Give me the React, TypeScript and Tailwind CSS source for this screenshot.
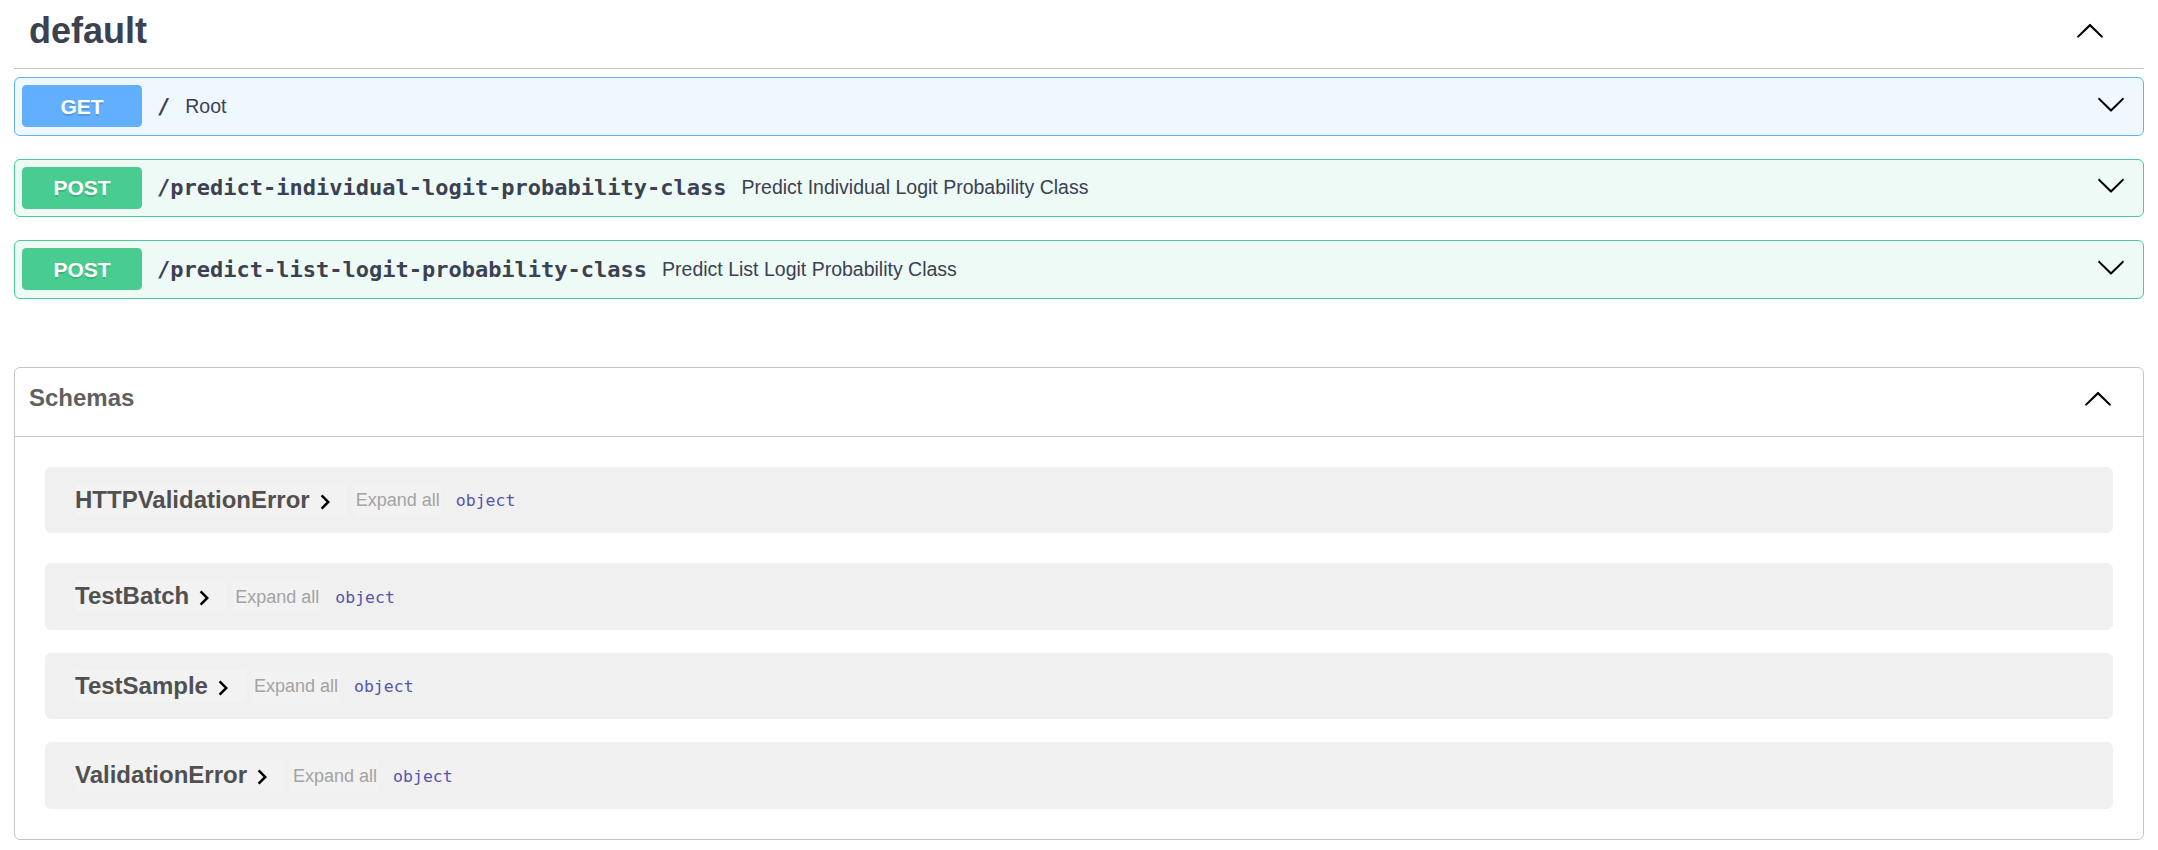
import React from 'react';

type Op = { method: 'GET' | 'POST'; path: string; summary: string };

const ops: Op[] = [
  { method: 'GET', path: '/', summary: 'Root' },
  { method: 'POST', path: '/predict-individual-logit-probability-class', summary: 'Predict Individual Logit Probability Class' },
  { method: 'POST', path: '/predict-list-logit-probability-class', summary: 'Predict List Logit Probability Class' },
];

const schemas = ['HTTPValidationError', 'TestBatch', 'TestSample', 'ValidationError'];

const ArrowUp = ({ className = '' }: { className?: string }) => (
  <svg viewBox="0 0 20 20" className={`w-[30px] h-[30px] shrink-0 fill-black ${className}`}>
    <path d="M17.418 14.908c.27.268.707.268.979 0a.68.68 0 000-.969l-7.908-7.83a.697.697 0 00-.979 0l-7.908 7.83a.68.68 0 000 .969c.271.268.709.268.979 0L10 7.767l7.418 7.141z" />
  </svg>
);

const ArrowDown = ({ className = '' }: { className?: string }) => (
  <svg viewBox="0 0 20 20" className={`w-[30px] h-[30px] shrink-0 fill-black ${className}`}>
    <path d="M17.418 6.109c.272-.268.709-.268.979 0s.271.701 0 .969l-7.908 7.83c-.27.268-.707.268-.979 0l-7.908-7.83c-.27-.268-.27-.701 0-.969.271-.268.709-.268.979 0L10 13.25l7.418-7.141z" />
  </svg>
);

function OpBlock({ op, first }: { op: Op; first: boolean }) {
  const isGet = op.method === 'GET';
  return (
    <div
      className={`flex items-center h-[58.5px] p-[7px] border rounded-[6px] ${first ? 'mt-[8px]' : 'mt-[23px]'} ${
        isGet ? 'border-[#61affe] bg-[#eff7ff]' : 'border-[#49cc90] bg-[#edfaf5]'
      }`}
    >
      <span
        className={`w-[120px] h-[42px] shrink-0 flex items-center justify-center rounded-[4.5px] text-white text-[21px] font-bold [text-shadow:0_1.5px_0_rgba(0,0,0,0.12)] ${
          isGet ? 'bg-[#61affe]' : 'bg-[#49cc90]'
        }`}
      >
        {op.method}
      </span>
      <span className="px-[15px] font-['DejaVu_Sans_Mono',monospace] font-bold text-[22px] text-[#3b4151]">{op.path}</span>
      <span className="flex-1 text-[19.5px] text-[#3b4151]">{op.summary}</span>
      <ArrowDown className="mr-[10px] mb-[5px]" />
    </div>
  );
}

export default function App() {
  return (
    <div className="min-h-screen bg-white px-[14px] font-['Liberation_Sans',Arial,sans-serif] text-[#3b4151]">
      {/* tag heading */}
      <div className="flex items-center pl-[15px] pr-[39px] pt-[10px] pb-[17px] border-b border-[#c4c6cb]">
        <h3 className="flex-1 text-[36px] leading-[41px] font-bold">default</h3>
        <ArrowUp className="-translate-y-[1px]" />
      </div>

      {ops.map((op, i) => (
        <OpBlock key={op.path + op.method} op={op} first={i === 0} />
      ))}

      {/* schemas */}
      <section className="mt-[68px] border border-[#c4c6cb] rounded-[6px]">
        <div className="flex items-center h-[69px] pl-[14px] pr-[30px] pt-[15px] pb-[23px] border-b border-[#c4c6cb]">
          <h4 className="flex-1 text-[24px] font-bold text-[#606060]">Schemas</h4>
          <ArrowUp />
        </div>
        <div className="pt-[30px] pb-[30px] flex flex-col gap-[23px]">
          {schemas.map((name, i) => (
            <div
              key={name}
              className={`mx-[30px] h-[66.5px] px-[30px] flex items-center rounded-[6px] bg-[#f0f0f0] ${i === 1 ? 'mt-[7px]' : ''}`}
            >
              <span className="flex items-center h-[32px] pr-[7px] bg-[#f2f2f2]">
                <span className="text-[24px] font-bold text-[#505050]">{name}</span>
                <svg viewBox="0 0 24 24" className="w-[30px] h-[30px] translate-y-[2px] fill-black">
                  <path d="M10 6L8.59 7.41 13.17 12l-4.58 4.59L10 18l6-6z" />
                </svg>
              </span>
              <span className="ml-[7px] pl-[2px] pr-[1px] h-[32px] flex items-center bg-[#f2f2f2] text-[18px] text-[#a3a3a3] translate-y-[1px]">
                Expand all
              </span>
              <span className="ml-[15px] font-['DejaVu_Sans_Mono',monospace] text-[16.5px] text-[#55a] translate-y-[1.5px]">
                object
              </span>
            </div>
          ))}
        </div>
      </section>
    </div>
  );
}
